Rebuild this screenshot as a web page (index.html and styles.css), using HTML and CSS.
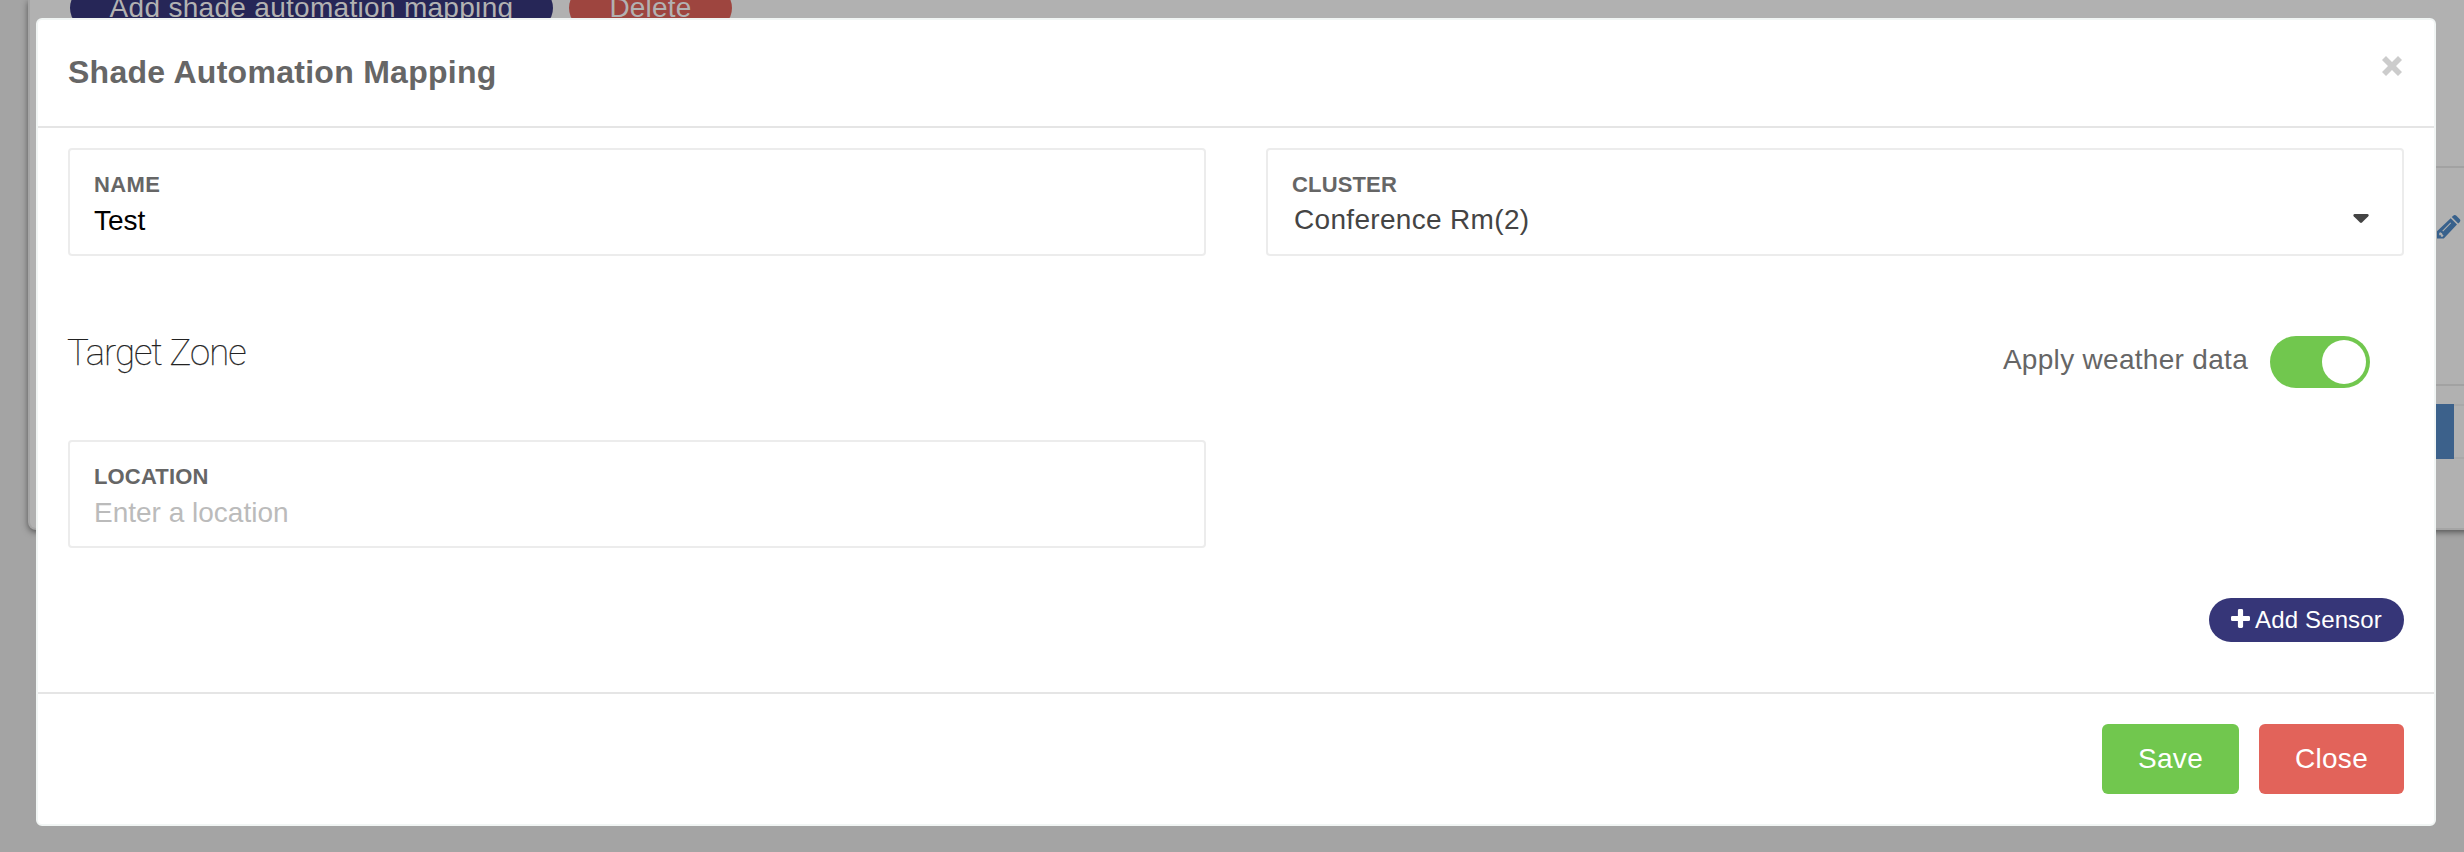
FILE: index.html
```html
<!DOCTYPE html>
<html lang="en">
<head>
<meta charset="utf-8">
<title>Shade Automation Mapping</title>
<link rel="stylesheet" href="styles.css">
</head>
<body>
<div class="page">
  <div class="panel">
    <div class="panel-toolbar">
      <span class="pill pill-navy">Add shade automation mapping</span>
      <span class="pill pill-red">Delete</span>
    </div>
    <div class="panel-table">
      <svg class="pencil" viewBox="0 0 24 24"><path fill="#38618c" fill-rule="evenodd" d="M0 16.300 13.700 3.200 20 9.500 6.800 23.500H0zM2.200 18v2.200h1.700v1.500h1.700L6.600 20.600 5.600 19.800 5 18.200 3.300 17.200zM5.300 15.800l.8.600 8-8.200-.7-.7zM14.800 2.100 16.200.8q1.600-1.400 3.200 0l3.200 3.200q1.500 1.600 0 3.200L21.200 8.500z"/></svg>
    </div>
    <div class="pager"><span class="page-current"></span><span class="page-next"></span></div>
  </div>
</div>
<div class="modal">
  <header class="modal-header">
    <h1 class="title">Shade Automation Mapping</h1>
    <svg class="dismiss" viewBox="0 0 20 20"><path fill="#ccc" d="M4 0 10 6 16 0 20 4 14 10 20 16 16 20 10 14 4 20 0 16 6 10 0 4z"/></svg>
  </header>
  <main class="modal-body">
    <div class="row">
      <div class="field"><label class="label label-name">NAME</label><span class="value value-black">Test</span></div>
      <div class="field"><label class="label">CLUSTER</label>
        <div class="select"><span class="value value-select">Conference Rm(2)</span>
        <svg class="caret" viewBox="0 0 16 10"><path fill="#444" d="M1.500 0h13q2 .8.800 2.300L9 8.600q-1 .8-2 0L.7 2.300Q-.3.800 1.500 0z"/></svg></div>
      </div>
    </div>
    <div class="zone">
      <h2 class="zone-title">Target Zone</h2>
      <div class="weather"><span class="weather-label">Apply weather data</span><span class="toggle"><span class="knob"></span></span></div>
    </div>
    <div class="row">
      <div class="field"><label class="label">LOCATION</label><span class="value value-placeholder">Enter a location</span></div>
    </div>
    <div class="sensor-row">
      <button class="add-sensor"><svg class="plus" viewBox="0 0 19 19"><path fill="#fff" d="M8.300 0h2.400q1.400 0 1.400 1.400v5.500h5.500q1.400 0 1.400 1.400v2.400q0 1.400-1.400 1.400h-5.500v5.500q0 1.400-1.400 1.400H8.300q-1.400 0-1.400-1.400v-5.500H1.400Q0 12.100 0 10.700V8.300q0-1.400 1.400-1.400h5.500V1.400Q6.900 0 8.300 0z"/></svg><span class="add-text">Add Sensor</span></button>
    </div>
  </main>
  <footer class="modal-footer">
    <button class="btn btn-save"><span class="btn-text">Save</span></button>
    <button class="btn btn-close"><span class="btn-text">Close</span></button>
  </footer>
</div>
</body>
</html>
```
FILE: styles.css
```css
* { box-sizing: border-box; }
body { margin: 0; width: 2464px; height: 852px; overflow: hidden; background: #a4a4a4; font-family: "Liberation Sans", Arial, sans-serif; position: relative; }
.page { padding-left: 28px; height: 852px; overflow: hidden; }
.panel { width: 2500px; height: 530px; background: #b1b1b1; border: 2px solid #a5a5a5; border-top: 0; border-radius: 0 0 0 8px; box-shadow: 0 2px 6px rgba(0,0,0,.5); }
.panel-toolbar { height: 168px; margin-left: 40px; display: flex; gap: 16px; align-items: flex-start; border-bottom: 2px solid #a2a2a2; }
.pill { height: 44px; margin-top: -14px; border-radius: 22px; color: #b2b2b2; font-size: 28px; line-height: 44px; text-align: center; white-space: nowrap; }
.pill-navy { width: 483px; background: #262657; letter-spacing: .3px; }
.pill-red { width: 163px; background: #9e453f; letter-spacing: .2px; }
.panel-table { height: 218px; margin-left: 40px; padding: 47px 0 0 2367px; border-bottom: 2px solid #a2a2a2; }
.pencil { width: 24px; height: 24px; display: block; }
.pager { display: flex; margin: 18px 0 0 2394px; height: 55px; }
.page-current { width: 30px; background: #3c618b; }
.page-next { width: 40px; border: solid #a9a9a9; border-width: 2px 0; }
.modal { position: absolute; left: 36px; top: 18px; width: 2400px; height: 808px; background: #fff; border: 2px solid #f1f5f4; border-radius: 6px; display: flex; flex-direction: column; }
.modal-header { height: 108px; padding: 0 30px; border-bottom: 2px solid #e5e5e5; display: flex; justify-content: space-between; }
.title { margin: 34px 0 0; font-size: 32px; line-height: 36px; color: #666; letter-spacing: .28px; }
.dismiss { width: 20px; height: 20px; margin: 36px 2px 0 0; }
.modal-body { flex: 1; padding: 20px 30px 0; }
.row { display: flex; gap: 60px; }
.field { width: 1138px; height: 108px; border: 2px solid #ececec; border-radius: 4px; padding: 22px 24px 0; }
.label { display: block; font-size: 22px; line-height: 26px; font-weight: bold; color: #666; letter-spacing: .15px; }
.label-name { letter-spacing: .4px; }
.value { display: block; font-size: 28px; line-height: 32px; margin-top: 7px; }
.value-black { color: #000; }
.value-select { color: #444; margin-top: 0; letter-spacing: .32px; }
.value-placeholder { color: #bbb; }
.select { display: flex; justify-content: space-between; margin-top: 6px; padding: 0 9px 0 2px; }
.caret { width: 16px; height: 10px; margin-top: 10px; }
.zone { height: 184px; display: flex; justify-content: space-between; }
.zone-title { margin: 75px 0 0 -1px; font-family: Roboto, sans-serif; font-weight: 100; font-size: 36.500px; line-height: 44px; color: #222; letter-spacing: -1px; -webkit-text-stroke: .25px #222; }
.weather { display: flex; padding: 80px 34px 0 0; }
.weather-label { font-size: 28px; line-height: 32px; color: #666; letter-spacing: .3px; margin: 8px 22px 0 0; }
.toggle { width: 100px; height: 52px; border-radius: 26px; background: #71c74e; padding: 4px 4px 4px 52px; }
.knob { display: block; width: 44px; height: 44px; border-radius: 50%; background: #fff; }
.sensor-row { display: flex; justify-content: flex-end; padding-top: 50px; }
.add-sensor { width: 195px; height: 44px; border: 0; border-radius: 22px; background: #363678; color: #fff; font: 24px/28px "Liberation Sans", Arial, sans-serif; letter-spacing: .15px; display: flex; padding: 8px 0 0 22px; white-space: nowrap; }
.plus { width: 19px; height: 19px; margin: 3px 5px 0 0; }
.modal-footer { height: 132px; border-top: 2px solid #e5e5e5; display: flex; justify-content: flex-end; gap: 20px; padding: 30px 30px 0 0; }
.btn { height: 70px; border: 0; border-radius: 6px; color: #fff; font: 28px/32px "Liberation Sans", Arial, sans-serif; letter-spacing: .3px; padding: 0; }
.btn-save { width: 137px; background: #71c74e; }
.btn-close { width: 145px; background: #e2635a; }
```
